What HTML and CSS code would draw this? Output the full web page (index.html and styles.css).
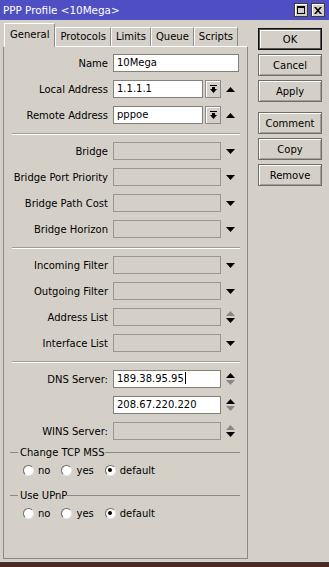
FILE: index.html
```html
<!DOCTYPE html>
<html lang="en">
<head>
	<meta charset="UTF-8">
	<title>PPP Profile</title>
	<link rel="stylesheet" href="styles.css">
</head>
<body>
<div class="win">
	<div class="title">
		<span class="title-text">PPP Profile &lt;10Mega&gt;</span>
		<div class="wbtns">
			<span class="wbtn"><svg width="8" height="8" viewBox="0 0 8 8"><path d="M0 0h8v8H0zM1 2v5h6V2z" fill-rule="evenodd"/></svg></span>
			<span class="wbtn"><svg width="8" height="7" viewBox="0 0 8 7"><path d="M0 0h2l2 2.2L6 0h2L5 3.5 8 7H6L4 4.8 2 7H0l3-3.5z"/></svg></span>
		</div>
	</div>
	<div class="main">
		<div class="left">
			<ul class="tabs">
				<li class="on">General</li>
				<li>Protocols</li>
				<li>Limits</li>
				<li>Queue</li>
				<li>Scripts</li>
			</ul>
			<div class="panel">
				<div class="sec">
					<div class="row"><label class="lbl">Name</label><div class="fld w1">10Mega</div></div>
					<div class="row"><label class="lbl">Local Address</label><div class="fld w2">1.1.1.1</div>
						<span class="dd"><svg width="7" height="9" viewBox="0 0 7 9"><path d="M0 0h7v1H0zM2 2h3v2h2L3.5 8 0 4h2z"/></svg></span>
						<span class="arr"><svg width="9" height="5" viewBox="0 0 9 5"><path d="M4.5 0L9 5H0z"/></svg></span></div>
					<div class="row"><label class="lbl">Remote Address</label><div class="fld w2">pppoe</div>
						<span class="dd"><svg width="7" height="9" viewBox="0 0 7 9"><path d="M0 0h7v1H0zM2 2h3v2h2L3.5 8 0 4h2z"/></svg></span>
						<span class="arr"><svg width="9" height="5" viewBox="0 0 9 5"><path d="M4.5 0L9 5H0z"/></svg></span></div>
				</div>
				<div class="sep"></div>
				<div class="sec">
					<div class="row"><label class="lbl">Bridge</label><div class="fld w3 off"></div>
						<span class="arr"><svg width="9" height="5" viewBox="0 0 9 5"><path d="M0 0h9L4.5 5z"/></svg></span></div>
					<div class="row"><label class="lbl">Bridge Port Priority</label><div class="fld w3 off"></div>
						<span class="arr"><svg width="9" height="5" viewBox="0 0 9 5"><path d="M0 0h9L4.5 5z"/></svg></span></div>
					<div class="row"><label class="lbl">Bridge Path Cost</label><div class="fld w3 off"></div>
						<span class="arr"><svg width="9" height="5" viewBox="0 0 9 5"><path d="M0 0h9L4.5 5z"/></svg></span></div>
					<div class="row"><label class="lbl">Bridge Horizon</label><div class="fld w3 off"></div>
						<span class="arr"><svg width="9" height="5" viewBox="0 0 9 5"><path d="M0 0h9L4.5 5z"/></svg></span></div>
				</div>
				<div class="sep"></div>
				<div class="sec">
					<div class="row"><label class="lbl">Incoming Filter</label><div class="fld w3 off"></div>
						<span class="arr"><svg width="9" height="5" viewBox="0 0 9 5"><path d="M0 0h9L4.5 5z"/></svg></span></div>
					<div class="row"><label class="lbl">Outgoing Filter</label><div class="fld w3 off"></div>
						<span class="arr"><svg width="9" height="5" viewBox="0 0 9 5"><path d="M0 0h9L4.5 5z"/></svg></span></div>
					<div class="row"><label class="lbl">Address List</label><div class="fld w3 off"></div>
						<span class="arr"><svg width="9" height="5" viewBox="0 0 9 5" class="dim"><path d="M4.5 0L9 5H0z"/></svg><svg width="9" height="5" viewBox="0 0 9 5"><path d="M0 0h9L4.5 5z"/></svg></span></div>
					<div class="row"><label class="lbl">Interface List</label><div class="fld w3 off"></div>
						<span class="arr"><svg width="9" height="5" viewBox="0 0 9 5"><path d="M0 0h9L4.5 5z"/></svg></span></div>
				</div>
				<div class="sep"></div>
				<div class="sec dns">
					<div class="row"><label class="lbl">DNS Server:</label><div class="fld w3">189.38.95.95<span class="caret"></span></div>
						<span class="arr"><svg width="9" height="5" viewBox="0 0 9 5"><path d="M4.5 0L9 5H0z"/></svg><svg width="9" height="5" viewBox="0 0 9 5" class="dim"><path d="M0 0h9L4.5 5z"/></svg></span></div>
					<div class="row"><label class="lbl"></label><div class="fld w3">208.67.220.220</div>
						<span class="arr"><svg width="9" height="5" viewBox="0 0 9 5"><path d="M4.5 0L9 5H0z"/></svg><svg width="9" height="5" viewBox="0 0 9 5" class="dim"><path d="M0 0h9L4.5 5z"/></svg></span></div>
					<div class="row"><label class="lbl">WINS Server:</label><div class="fld w3 off"></div>
						<span class="arr"><svg width="9" height="5" viewBox="0 0 9 5" class="dim"><path d="M4.5 0L9 5H0z"/></svg><svg width="9" height="5" viewBox="0 0 9 5"><path d="M0 0h9L4.5 5z"/></svg></span></div>
				</div>
				<div class="grp">
					<div class="gt">Change TCP MSS</div>
					<div class="radios">
						<span class="rad"><i class="dot"></i>no</span>
						<span class="rad"><i class="dot"></i>yes</span>
						<span class="rad"><i class="dot on"></i>default</span>
					</div>
				</div>
				<div class="grp">
					<div class="gt">Use UPnP</div>
					<div class="radios">
						<span class="rad"><i class="dot"></i>no</span>
						<span class="rad"><i class="dot"></i>yes</span>
						<span class="rad"><i class="dot on"></i>default</span>
					</div>
				</div>
			</div>
		</div>
		<div class="btns">
			<div class="btn def">OK</div>
			<div class="btn">Cancel</div>
			<div class="btn">Apply</div>
			<div class="btn gap">Comment</div>
			<div class="btn">Copy</div>
			<div class="btn">Remove</div>
		</div>
	</div>
</div>
</body>
</html>
```

FILE: styles.css
```css
*{
	margin: 0;
	padding: 0;
	box-sizing: border-box;
	list-style: none;
}
body{
	width: 329px;
	height: 567px;
	overflow: hidden;
	background-color: #4a2a22;
	font-family: "DejaVu Sans", sans-serif;
	font-size: 10px;
	color: #000;
}
.win{
	height: 563px;
	background-color: #d4d0c8;
	border-bottom: 1px solid #3a3a3a;
	display: flex;
	flex-direction: column;
}
.title{
	height: 20px;
	background-color: #4f4fc3;
	color: #fff;
	display: flex;
	align-items: center;
	padding: 0 4px 0 3px;
	font-size: 10.4px;
}
.title-text{
	flex: 1;
}
.wbtns{
	display: flex;
	gap: 3px;
}
.wbtn{
	width: 14px;
	height: 14px;
	background-color: #d4d0c8;
	border: 1px solid #3c3c3c;
	box-shadow: inset 1px 1px 0 #fff;
	display: flex;
	align-items: center;
	justify-content: center;
}
.main{
	flex: 1;
	display: flex;
	padding: 3px 0 0 3px;
}
.left{
	width: 245px;
	display: flex;
	flex-direction: column;
	margin-bottom: 3px;
}
.tabs{
	display: flex;
	align-items: flex-end;
	height: 23px;
	padding-left: 1px;
}
.tabs li{
	height: 19px;
	line-height: 18px;
	padding: 0 4px;
	border: 1px solid #fff;
	border-right-color: #8d8a85;
	border-bottom: none;
}
.tabs li.on{
	height: 24px;
	line-height: 21px;
	padding: 0 5px;
	margin-bottom: -1px;
	background-color: #d4d0c8;
	position: relative;
}
.panel{
	flex: 1;
	border: 1px solid #8d8a85;
	border-top-color: #fff;
	padding-top: 7px;
}
.sec{
	display: flex;
	flex-direction: column;
	gap: 8px;
}
.sec.dns{
	margin-top: 1px;
}
.row{
	display: flex;
	align-items: center;
	height: 18px;
	padding-left: 8px;
}
.lbl{
	width: 96px;
	margin-right: 5px;
	text-align: right;
	white-space: nowrap;
}
.fld{
	height: 18px;
	border: 1px solid #828079;
	background-color: #fff;
	padding-left: 3px;
	line-height: 16px;
	white-space: nowrap;
}
.fld.off{
	background-color: #d4d0c8;
	border-color: #9a9791;
}
.w1{ width: 126px; }
.w2{ width: 90px; }
.w3{ width: 108px; }
.caret{
	display: inline-block;
	width: 1px;
	height: 12px;
	background-color: #000;
	vertical-align: -2px;
	margin-left: 1px;
}
.dd{
	width: 16px;
	height: 18px;
	margin-left: 2px;
	border: 1px solid #8d8a85;
	box-shadow: inset 1px 1px 0 #fff;
	display: flex;
	align-items: center;
	justify-content: center;
}
.arr{
	width: 10px;
	margin-left: 4px;
	display: flex;
	flex-direction: column;
	align-items: center;
	gap: 2px;
}
.arr svg{
	display: block;
}
.arr .dim{
	fill: #8a8782;
}
.sep{
	height: 2px;
	border-top: 1px solid #a09d97;
	border-bottom: 1px solid #fff;
	margin: 9px 7px 7px 8px;
}
.grp{
	margin: 6px 7px 0 6px;
}
.grp + .grp{
	margin-top: 12px;
}
.gt{
	display: flex;
	align-items: center;
	height: 12px;
}
.gt::before{
	content: "";
	width: 8px;
	border-top: 1px solid #8d8a85;
	margin-right: 2px;
}
.gt::after{
	content: "";
	flex: 1;
	border-top: 1px solid #8d8a85;
}
.radios{
	display: flex;
	align-items: center;
	height: 14px;
	margin-top: 5px;
	padding-left: 13px;
}
.rad{
	display: flex;
	align-items: center;
	margin-right: 11px;
}
.dot{
	width: 11px;
	height: 11px;
	border-radius: 50%;
	background-color: #fff;
	border: 1px solid;
	border-color: #6b6b6b #e6e6e6 #e6e6e6 #6b6b6b;
	margin-right: 4px;
	display: flex;
	align-items: center;
	justify-content: center;
}
.dot.on::after{
	content: "";
	width: 4px;
	height: 4px;
	background-color: #000;
	border-radius: 50%;
}
.btns{
	width: 64px;
	margin-left: 10px;
	padding-top: 5px;
	display: flex;
	flex-direction: column;
	gap: 4px;
}
.btn{
	height: 22px;
	display: flex;
	align-items: center;
	justify-content: center;
	border: 1px solid #6e6c68;
	box-shadow: inset 1px 1px 0 #fff, inset -1px -1px 0 #a3a09a;
}
.btn.def{
	border-color: #111;
	box-shadow: inset 0 0 0 1px #555, inset 2px 2px 0 #fff;
}
.btn.gap{
	margin-top: 6px;
}
```
